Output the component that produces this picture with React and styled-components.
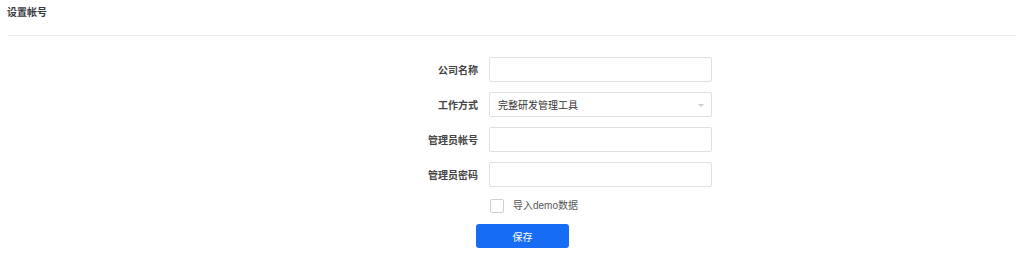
import React from "react";
import styled, { createGlobalStyle } from "styled-components";

const Global = createGlobalStyle`
  html, body { margin: 0; padding: 0; background: #fff; }
  body { font-family: "Liberation Sans", "Noto Sans CJK SC", sans-serif; }
  * { box-sizing: border-box; }
`;

const Page = styled.div`
  width: 1024px;
  height: 265px;
  padding: 0 7px;
`;

const Header = styled.div`
  height: 36px;
  padding-top: 6px;
  border-bottom: 1px solid #eeeeee;
`;

const Title = styled.h1`
  margin: 0;
  font-size: 10px;
  line-height: 14px;
  font-weight: bold;
  color: #3a3a44;
`;

const Form = styled.div`
  margin-top: 21px;
  margin-left: 371px;
  display: grid;
  grid-template-columns: 100px 223px;
  column-gap: 11px;
  row-gap: 10px;
  align-items: center;
`;

const Label = styled.label`
  text-align: right;
  font-size: 10px;
  font-weight: bold;
  color: #444;
`;

const Field = styled.div`
  position: relative;
  height: 25px;
  border: 1px solid #e0e0e0;
  border-radius: 2px;
  background: #fff;
  display: flex;
  align-items: center;
  padding: 0 8px;
  font-size: 10px;
  color: #333;
`;

const Arrow = styled.span`
  position: absolute;
  right: 7px;
  top: 11px;
  width: 0;
  height: 0;
  border-left: 3px solid transparent;
  border-right: 3px solid transparent;
  border-top: 3px solid #d0d0d0;
`;

const CheckRow = styled.div`
  grid-column: 2;
  display: flex;
  align-items: center;
  gap: 9px;
  height: 14px;
  line-height: 14px;
  margin-top: 2px;
  padding-left: 1px;
  font-size: 10px;
  color: #555;
`;

const Box = styled.span`
  width: 14px;
  height: 14px;
  border: 1px solid #cfcfcf;
  border-radius: 2px;
  background: #fff;
`;

const ButtonRow = styled.div`
  grid-column: 2;
  margin-left: -13px;
  margin-top: 1px;
  display: flex;
`;

const Button = styled.button`
  width: 93px;
  height: 24px;
  border: none;
  border-radius: 3px;
  background: #166cf2;
  color: #fff;
  font-family: inherit;
  font-size: 10px;
  cursor: pointer;
`;

export default function App() {
  return (
    <Page>
      <Global />
      <Header>
        <Title>设置帐号</Title>
      </Header>
      <Form>
        <Label>公司名称</Label>
        <Field />
        <Label>工作方式</Label>
        <Field>
          完整研发管理工具
          <Arrow />
        </Field>
        <Label>管理员帐号</Label>
        <Field />
        <Label>管理员密码</Label>
        <Field />
        <CheckRow>
          <Box />
          导入demo数据
        </CheckRow>
        <ButtonRow>
          <Button>保存</Button>
        </ButtonRow>
      </Form>
    </Page>
  );
}
